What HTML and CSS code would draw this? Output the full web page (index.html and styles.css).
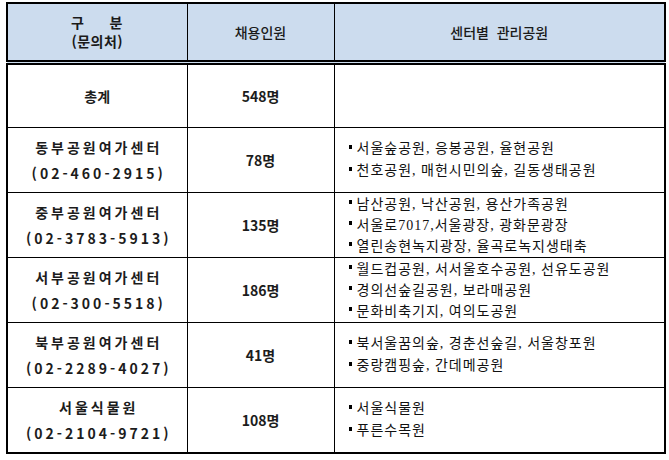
FILE: index.html
```html
<!DOCTYPE html>
<html lang="ko">
<head>
<meta charset="utf-8">
<link rel="stylesheet" href="styles.css">
</head>
<body>
<table class="tbl">
  <colgroup>
    <col class="c1"><col class="c2"><col class="c3">
  </colgroup>
  <thead>
    <tr class="head">
      <th><div class="h1">구&nbsp;&nbsp;&nbsp;&nbsp;&nbsp;분</div><div class="h2">(문의처)</div></th>
      <th>채용인원</th>
      <th>센터별&nbsp; 관리공원</th>
    </tr>
  </thead>
  <tbody>
    <tr class="r total">
      <td class="name">총계</td>
      <td class="num">548명</td>
      <td></td>
    </tr>
    <tr class="r">
      <td class="name"><div class="nm">동부공원여가센터</div><div class="ph">(02-460-2915)</div></td>
      <td class="num">78명</td>
      <td class="parks"><div class="li">서울숲공원, 응봉공원, 율현공원</div><div class="li">천호공원, 매헌시민의숲, 길동생태공원</div></td>
    </tr>
    <tr class="r">
      <td class="name"><div class="nm">중부공원여가센터</div><div class="ph">(02-3783-5913)</div></td>
      <td class="num">135명</td>
      <td class="parks p3"><div class="li">남산공원, 낙산공원, 용산가족공원</div><div class="li">서울로7017,서울광장, 광화문광장</div><div class="li">열린송현녹지광장, 율곡로녹지생태축</div></td>
    </tr>
    <tr class="r">
      <td class="name"><div class="nm">서부공원여가센터</div><div class="ph">(02-300-5518)</div></td>
      <td class="num">186명</td>
      <td class="parks p3"><div class="li">월드컵공원, 서서울호수공원, 선유도공원</div><div class="li">경의선숲길공원, 보라매공원</div><div class="li">문화비축기지, 여의도공원</div></td>
    </tr>
    <tr class="r">
      <td class="name"><div class="nm">북부공원여가센터</div><div class="ph">(02-2289-4027)</div></td>
      <td class="num">41명</td>
      <td class="parks"><div class="li">북서울꿈의숲, 경춘선숲길, 서울창포원</div><div class="li">중랑캠핑숲, 간데메공원</div></td>
    </tr>
    <tr class="r">
      <td class="name"><div class="nm">서울식물원</div><div class="ph">(02-2104-9721)</div></td>
      <td class="num">108명</td>
      <td class="parks"><div class="li">서울식물원</div><div class="li">푸른수목원</div></td>
    </tr>
  </tbody>
</table>
</body>
</html>
```
FILE: styles.css
```css
html, body {
  margin: 0;
  padding: 0;
  background: #fff;
}
body {
  padding: 2px 0 0 6px;
  font-family: "Noto Sans CJK KR", "Noto Sans", sans-serif;
  color: #111;
}
.tbl {
  border-collapse: collapse;
  table-layout: fixed;
  width: 658px;
  border: 2px solid #000;
}
.c1 { width: 180px; }
.c2 { width: 147px; }
.c3 { width: 331px; }
.tbl th, .tbl td {
  border: 1px solid #000;
  padding: 0;
  text-align: center;
  vertical-align: middle;
}
.head th {
  background: #ccdcee;
  height: 56px;
  font-size: 14px;
  font-weight: 500;
  color: #1a1a1a;
  border-bottom: 5px double #000;
  line-height: 19px;
}
.h1 { font-weight: 700; letter-spacing: 1px; }
.h2 { font-weight: 700; letter-spacing: 0.5px; }
.r td { height: 64px; }
.total td { height: 62px; }
.name {
  font-size: 14px;
  font-weight: 700;
  line-height: 26px;
  color: #1c1c1c;
}
.nm { letter-spacing: 3px; padding-left: 3px; }
.ph { letter-spacing: 3px; padding-left: 3px; }
.num {
  font-size: 14px;
  font-weight: 700;
  color: #1c1c1c;
}
.parks {
  text-align: left !important;
  padding-left: 14px !important;
  font-family: "Liberation Serif", "Noto Sans CJK KR", serif;
  font-size: 14px;
  letter-spacing: 1px;
  line-height: 22px;
  color: #111;
}
.p3 { line-height: 21px; }
.li {
  display: flex;
  align-items: center;
  gap: 5px;
  white-space: nowrap;
}
.li::before {
  content: "";
  width: 3px;
  height: 4px;
  background: #000;
  flex: none;
  margin-top: -4px;
}
```
